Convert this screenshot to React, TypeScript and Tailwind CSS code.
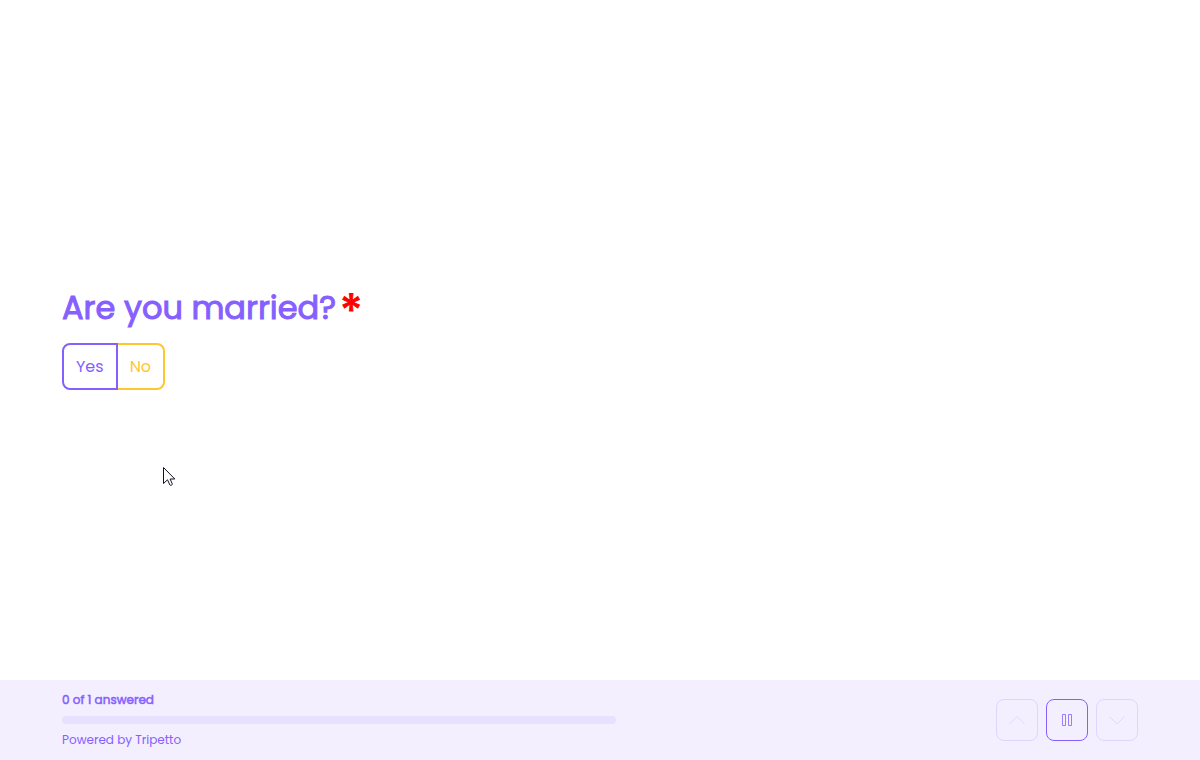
import type { ReactNode } from 'react';
import { clsx } from 'clsx';

interface NavButtonProps {
  label: string;
  disabled?: boolean;
  children: ReactNode;
}

const NavButton = ({ label, disabled, children }: NavButtonProps) => (
  <button
    type="button"
    aria-label={label}
    disabled={disabled}
    className={clsx(
      'flex size-[42px] items-center justify-center rounded-lg border',
      disabled ? 'border-[#dfd6ff] text-[#dfd6ff]' : 'border-[#8560ff] text-[#8560ff]'
    )}
  >
    <svg className="size-4" viewBox="0 0 16 16" fill="none" stroke="currentColor" aria-hidden="true">
      {children}
    </svg>
  </button>
);

const Question = () => (
  <section className="px-[62px]">
    <h1 className="mb-2 flex items-start gap-1 text-[32px] leading-9 font-normal text-[#8560ff] [-webkit-text-stroke:1px_currentColor]">
      Are you married?
      <span className="text-[46px] leading-[45px] text-[#ff0000]">*</span>
    </h1>
    <div className="flex text-base leading-[23px]">
      <button
        type="button"
        className="z-10 rounded-l-lg border-2 border-[#8560ff] px-3 py-2.5 text-[#8560ff]"
      >
        Yes
      </button>
      <button
        type="button"
        className="-ml-0.5 rounded-r-lg border-2 border-[#ffc72f] px-3 py-2.5 text-[#ffc72f]"
      >
        No
      </button>
    </div>
  </section>
);

const Footer = () => (
  <footer className="flex h-20 items-center justify-between gap-8 bg-[#f3efff] px-[62px] text-xs text-[#8560ff]">
    <div className="max-w-[554px] flex-1">
      <p className="[-webkit-text-stroke:0.5px_currentColor]">0 of 1 answered</p>
      <div
        role="progressbar"
        aria-label="Progress"
        aria-valuenow={0}
        aria-valuemax={1}
        className="my-2 h-2 rounded-full bg-[#e7e0ff]"
      />
      <a href="#" className="block w-fit">
        Powered by Tripetto
      </a>
    </div>
    <nav className="flex gap-2">
      <NavButton label="Previous" disabled>
        <path d="M.5 12 8 4.5l7.5 7.5" />
      </NavButton>
      <NavButton label="Pause">
        <path strokeWidth=".8" d="M3.5 2.5h3v11h-3zM9.5 2.5h3v11h-3z" />
      </NavButton>
      <NavButton label="Next" disabled>
        <path d="M.5 4.5 8 12l7.5-7.5" />
      </NavButton>
    </nav>
  </footer>
);

const Cursor = () => (
  <svg
    className="pointer-events-none absolute top-[466px] left-[163px] h-[21px] w-[13px]"
    viewBox="0 0 13 21"
    fill="#fff"
    stroke="#12121e"
    aria-hidden="true"
  >
    <path d="M.5 1.5v16l4-3.7 2.4 5.2c.5.9 2.8 0 2.4-1.1l-2.2-4.9h4.7z" />
  </svg>
);

export default function App() {
  return (
    <div className="relative flex min-h-screen flex-col bg-white font-['Poppins','Inter',sans-serif]">
      <main className="flex flex-1 flex-col justify-center">
        <Question />
      </main>
      <Footer />
      <Cursor />
    </div>
  );
}
